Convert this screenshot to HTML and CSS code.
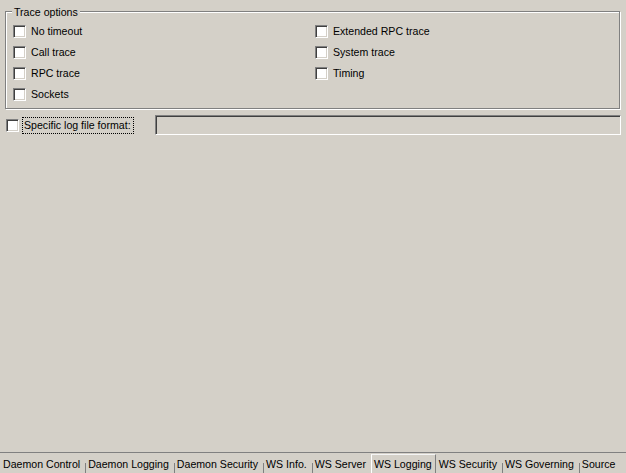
FILE: index.html
```html
<!DOCTYPE html>
<html>
<head>
<meta charset="utf-8">
<link rel="stylesheet" href="styles.css">
</head>
<body>
<div class="page">
  <div class="group">
    <span class="group-title">Trace options</span>
    <div class="options">
      <label class="opt"><span class="cb"></span><span>No timeout</span></label>
      <label class="opt"><span class="cb"></span><span>Extended RPC trace</span></label>
      <label class="opt"><span class="cb"></span><span>Call trace</span></label>
      <label class="opt"><span class="cb"></span><span>System trace</span></label>
      <label class="opt"><span class="cb"></span><span>RPC trace</span></label>
      <label class="opt"><span class="cb"></span><span>Timing</span></label>
      <label class="opt"><span class="cb"></span><span>Sockets</span></label>
    </div>
  </div>
  <div class="logrow">
    <span class="cb"></span>
    <span class="focus">Specific log file format:</span>
    <div class="field"></div>
  </div>
  <div class="spacer"></div>
  <div class="tabs">
    <span class="tab first">Daemon Control</span>
    <span class="tab">Daemon Logging</span>
    <span class="tab">Daemon Security</span>
    <span class="tab">WS Info.</span>
    <span class="tab">WS Server</span>
    <span class="tab active">WS Logging</span>
    <span class="tab after-active">WS Security</span>
    <span class="tab">WS Governing</span>
    <span class="tab">Source</span>
  </div>
</div>
</body>
</html>
```

FILE: styles.css
```css
html, body {
  margin: 0;
  padding: 0;
  background: #d4d0c8;
}

body {
  font-family: "Liberation Sans", Arial, sans-serif;
  font-size: 10.6px;
  line-height: 13px;
  color: #000;
}

.page {
  width: 626px;
  height: 473px;
  display: flex;
  flex-direction: column;
  overflow: hidden;
}

.group {
  position: relative;
  margin: 11px 6px 0 5px;
  border: 1px solid #808080;
  box-shadow: 1px 1px 0 #fff, inset 1px 1px 0 #fff;
  padding: 9px 0 3px 7px;
}

.group-title {
  position: absolute;
  top: -6px;
  left: 6px;
  padding: 0 2px;
  background: #d4d0c8;
}

.options {
  display: grid;
  grid-template-columns: 302px 1fr;
  grid-auto-rows: 21px;
}

.opt {
  display: flex;
  align-items: center;
  gap: 5px;
}

.cb {
  flex: none;
  width: 13px;
  height: 13px;
  box-sizing: border-box;
  background: #fff;
  border: 1px solid;
  border-color: #808080 #fff #fff #808080;
  box-shadow: inset 1px 1px 0 #404040, inset -1px -1px 0 #d4d0c8;
}

.logrow {
  display: flex;
  align-items: center;
  margin-top: 6px;
  padding: 0 5px 0 6px;
  height: 20px;
}

.focus {
  margin-left: 3px;
  border: 1px dotted #000;
  padding: 1px 2px 1px 1px;
  line-height: 13px;
}

.field {
  margin-left: auto;
  width: 466px;
  height: 20px;
  box-sizing: border-box;
  background: #d4d0c8;
  border: 1px solid;
  border-color: #808080 #fff #fff #808080;
  box-shadow: inset 1px 1px 0 #404040, inset -1px -1px 0 #d4d0c8;
}

.spacer {
  flex: 1;
}

.tabs {
  display: flex;
  height: 20px;
  border-top: 1px solid #808080;
}

.tab {
  box-sizing: border-box;
  height: 19px;
  margin-top: 1px;
  padding: 4px 5px 0 3px;
  white-space: nowrap;
  background: linear-gradient(#808080, #808080) left bottom / 1px 10px no-repeat;
}

.tab.first,
.tab.after-active {
  background: none;
}

.tab.active {
  border-left: 1px solid #fff;
  border-top: 1px solid #f4f4f4;
  border-right: 1px solid #808080;
  padding: 3px 3px 0 2px;
  background: none;
}
```
